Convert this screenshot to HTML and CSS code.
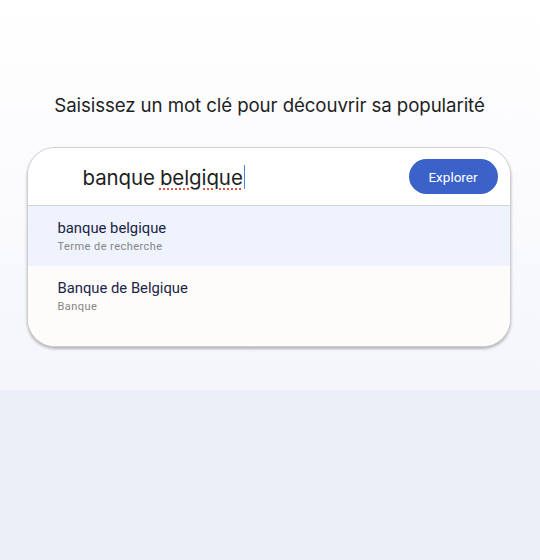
FILE: index.html
```html
<!DOCTYPE html>
<html lang="fr">
<head>
<meta charset="utf-8">
<link rel="stylesheet" href="styles.css">
</head>
<body>
<div class="page">
  <section class="hero">
    <h1 class="title">Saisissez un mot clé pour découvrir sa popularité</h1>
    <div class="card">
      <div class="search-row">
        <div class="query">banque <span class="misspelt">belgique</span><span class="caret"></span></div>
        <button class="explore">Explorer</button>
      </div>
      <div class="suggestion active">
        <div class="s-main">banque belgique</div>
        <div class="s-sub">Terme de recherche</div>
      </div>
      <div class="suggestion last">
        <div class="s-main">Banque de Belgique</div>
        <div class="s-sub">Banque</div>
      </div>
    </div>
  </section>
  <section class="lower"></section>
</div>
</body>
</html>
```
FILE: styles.css
```css
html, body {
  margin: 0;
  padding: 0;
}
body {
  font-family: Roboto, "Liberation Sans", sans-serif;
  background: #eceff7;
  width: 540px;
  height: 560px;
  overflow: hidden;
}
.page {
  display: flex;
  flex-direction: column;
  height: 560px;
}
.hero {
  height: 390px;
  background: linear-gradient(#ffffff 0%, #f5f6fb 100%);
  display: flex;
  flex-direction: column;
  align-items: center;
  box-sizing: border-box;
  padding-top: 92px;
}
.lower {
  flex: 1;
  background: #eceff7;
}
.title {
  margin: 0 0 0 -1px;
  font-family: Inter, Roboto, sans-serif;
  font-weight: 400;
  font-size: 18.7px;
  line-height: 27px;
  color: #1f1f1f;
  letter-spacing: -0.1px;
}
.card {
  margin-top: 28px;
  margin-right: 3px;
  width: 484px;
  background: #fdfcfb;
  border-radius: 28px;
  border: 1px solid #cfcfd2;
  box-shadow: 0 2px 3px rgba(0,0,0,0.28);
  overflow: hidden;
  box-sizing: border-box;
}
.search-row {
  height: 57px;
  background: #ffffff;
  border-bottom: 1px solid #d4d4d6;
  display: flex;
  align-items: center;
  justify-content: space-between;
  padding: 0 12px 0 55px;
}
.query {
  font-family: Inter, Roboto, sans-serif;
  font-size: 20.5px;
  letter-spacing: -0.1px;
  color: #1f1f1f;
  display: flex;
  align-items: center;
  padding-top: 1px;
}
.misspelt {
  margin-left: 5px;
  text-decoration: underline dotted #d9534f;
  text-underline-offset: 4px;
}
.caret {
  display: inline-block;
  width: 1.5px;
  height: 24px;
  background: #5b7fd1;
  margin-left: 1px;
}
.explore {
  width: 89px;
  height: 35px;
  border: none;
  border-radius: 18px;
  background: #3b62c9;
  color: #ffffff;
  font-family: Roboto, "Liberation Sans", sans-serif;
  font-size: 13.5px;
  padding: 0;
}
.suggestion {
  height: 60px;
  box-sizing: border-box;
  padding: 13px 30px 0;
}
.suggestion.active {
  background: #eef3fd;
}
.suggestion.last {
  height: 80px;
  background: #fdfcfb;
}
.s-main {
  font-size: 14.8px;
  line-height: 18px;
  color: #1b2445;
}
.s-sub {
  margin-top: 3px;
  font-size: 11px;
  line-height: 14px;
  color: #858585;
  font-weight: 400;
  letter-spacing: 0.45px;
}
```
